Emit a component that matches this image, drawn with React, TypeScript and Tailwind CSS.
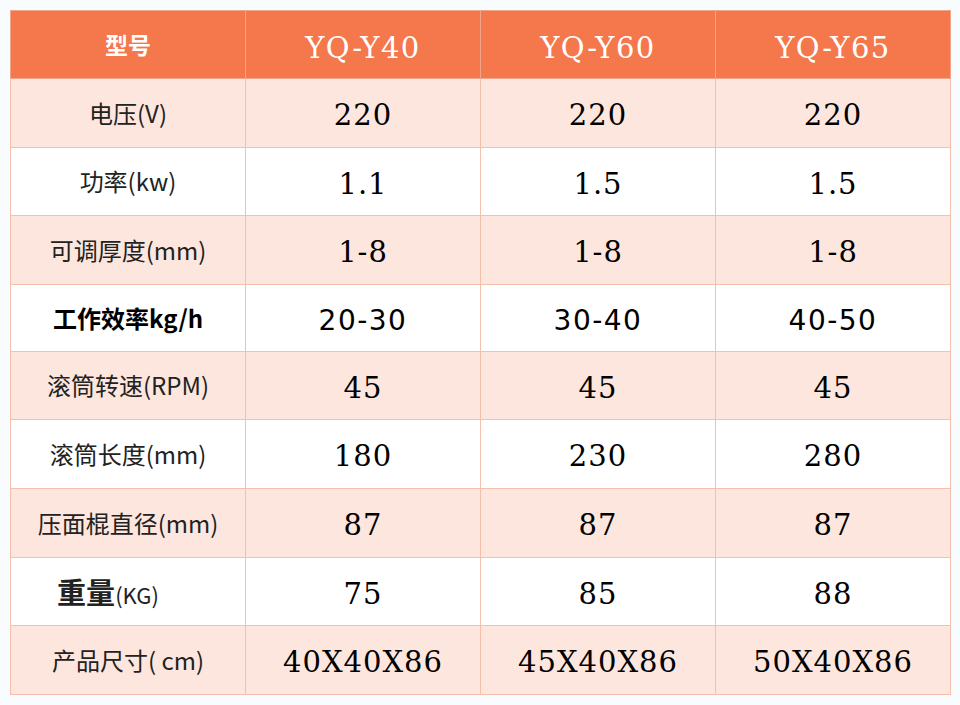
import React from "react"

interface Row {
  label: React.ReactNode
  values: string[]
  sans?: boolean
}

const models = ["YQ-Y40", "YQ-Y60", "YQ-Y65"]

const rows: Row[] = [
  { label: "电压(V)", values: ["220", "220", "220"] },
  { label: "功率(kw)", values: ["1.1", "1.5", "1.5"] },
  { label: "可调厚度(mm)", values: ["1-8", "1-8", "1-8"] },
  {
    label: <span className="font-bold text-black">工作效率kg/h</span>,
    values: ["20-30", "30-40", "40-50"],
    sans: true,
  },
  { label: "滚筒转速(RPM)", values: ["45", "45", "45"] },
  { label: "滚筒长度(mm)", values: ["180", "230", "280"] },
  { label: "压面棍直径(mm)", values: ["87", "87", "87"] },
  {
    label: (
      <span className="pr-[40px]">
        <span className="text-[29px] font-bold">重量</span>
        <span className="text-[22px]">(KG)</span>
      </span>
    ),
    values: ["75", "85", "88"],
  },
  { label: "产品尺寸( cm)", values: ["40X40X86", "45X40X86", "50X40X86"] },
]

const sansCjk = "font-['Noto_Sans_CJK_SC','Noto_Sans',sans-serif]"
const serif = "font-['DejaVu_Serif','Liberation_Serif',serif]"

export default function App() {
  return (
    <div className="w-[960px] h-[705px] bg-[#f9fcfe] p-[10px]">
      <table className="w-[940px] h-[685px] border-collapse table-fixed">
        <thead>
          <tr className="h-[68px] bg-[#f5774c] text-white">
            <th className={`w-[235px] border border-[#f0a58a] font-bold text-[23px] ${sansCjk}`}>型号</th>
            {models.map((m) => (
              <th
                key={m}
                className={`w-[235px] pt-[8px] border-l border-l-[#fbd2c2] border-y border-y-[#f0a58a] border-r border-r-[#f0a58a] font-normal text-[29px] tracking-[1.5px] ${serif}`}
              >
                {m}
              </th>
            ))}
          </tr>
        </thead>
        <tbody>
          {rows.map((row, i) => (
            <tr key={i} className={i % 2 === 0 ? "bg-[#fde6dd]" : "bg-white"}>
              <td className={`border border-[#f3c1ab] text-center text-[24px] text-[#222] ${sansCjk}`}>
                {row.label}
              </td>
              {row.values.map((v, j) => (
                <td
                  key={j}
                  className={`border border-[#f3c1ab] pt-[6px] text-center text-black ${
                    row.sans
                      ? "text-[28px] tracking-[1.5px] font-['DejaVu_Sans','Liberation_Sans',sans-serif]"
                      : `text-[29px] tracking-[1px] ${serif}`
                  }`}
                >
                  {v}
                </td>
              ))}
            </tr>
          ))}
        </tbody>
      </table>
    </div>
  )
}
